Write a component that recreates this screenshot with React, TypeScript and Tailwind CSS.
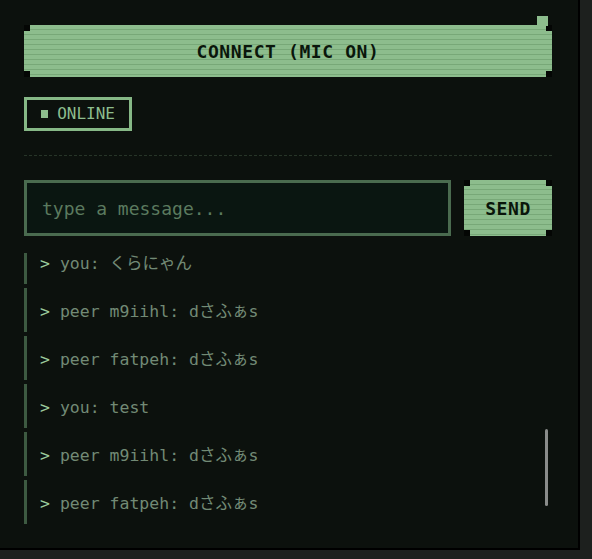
import React from 'react';

// chat log, newest last
const messages = [
  { from: 'you', text: 'くらにゃん' },
  { from: 'peer m9iihl', text: 'dさふぁs' },
  { from: 'peer fatpeh', text: 'dさふぁs' },
  { from: 'you', text: 'test' },
  { from: 'peer m9iihl', text: 'dさふぁs' },
  { from: 'peer fatpeh', text: 'dさふぁs' },
];

const stripes =
  'bg-[repeating-linear-gradient(to_bottom,#8dbd8d_0px,#8dbd8d_4px,#78a878_4px,#78a878_5px)]';

const Notches: React.FC = () => (
  <>
    <span className="absolute left-0 top-0 h-1.5 w-1.5 bg-[#040604]" />
    <span className="absolute right-0 top-0 h-1.5 w-1.5 bg-[#040604]" />
    <span className="absolute left-0 bottom-0 h-1.5 w-1.5 bg-[#040604]" />
    <span className="absolute right-0 bottom-0 h-1.5 w-1.5 bg-[#040604]" />
  </>
);

const App: React.FC = () => {
  return (
    <div className="min-h-screen bg-[#1d201e] font-['DejaVu_Sans_Mono','Noto_Sans_CJK_JP',monospace]">
      <div className="flex h-[550px] w-[580px] flex-col border-r-2 border-b-2 border-black bg-[#0c110d] pl-6 pr-[26px] pt-[25px]">
        {/* connect */}
        <button
          className={`relative flex h-[52px] w-full items-center justify-center ${stripes} text-[18px] font-bold tracking-[0.6px] text-[#0a160b]`}
        >
          <Notches />
          <span className="absolute -top-[9px] right-1 h-[10px] w-[11px] bg-[#8dbd8d]" />
          CONNECT (MIC ON)
        </button>

        {/* status */}
        <div className="mt-5 flex h-[34px] w-[108px] items-center gap-[9px] border-[3px] border-[#86b886] px-[14px] text-[16px] text-[#8dbd8d]">
          <span className="h-2 w-2 bg-[#8dbd8d]" />
          ONLINE
        </div>

        <div className="mt-6 border-t border-dashed border-[#273528]" />

        {/* composer */}
        <div className="mt-6 flex h-[56px] gap-[13px]">
          <input
            className="h-full flex-1 border-[3px] border-[#4a6b4f] bg-[#0a1611] px-[15px] text-[18px] text-[#9ac49a] outline-none placeholder:text-[#5b7a5f]"
            placeholder="type a message..."
          />
          <button
            className={`relative h-full w-[88px] ${stripes} text-[18px] font-bold tracking-[0.6px] text-[#0a160b]`}
          >
            <Notches />
            SEND
          </button>
        </div>

        {/* log */}
        <div className="relative mt-[17px] flex h-[271px] flex-col justify-end gap-1 overflow-hidden">
          {messages.map((m, i) => (
            <div
              key={i}
              className="flex h-[44px] shrink-0 items-center border-l-[3px] border-[#3d5a41] pl-[13px] pt-1 text-[16.5px] leading-6 text-[#728a75]"
            >
              <span className="text-[#9ccb9c]">&gt;&nbsp;</span>
              {m.from}: {m.text}
            </div>
          ))}
          <span className="absolute right-[4px] bottom-[18px] h-[77px] w-[3px] rounded-full bg-[#8a8c8a]" />
        </div>
      </div>
    </div>
  );
};

export default App;
